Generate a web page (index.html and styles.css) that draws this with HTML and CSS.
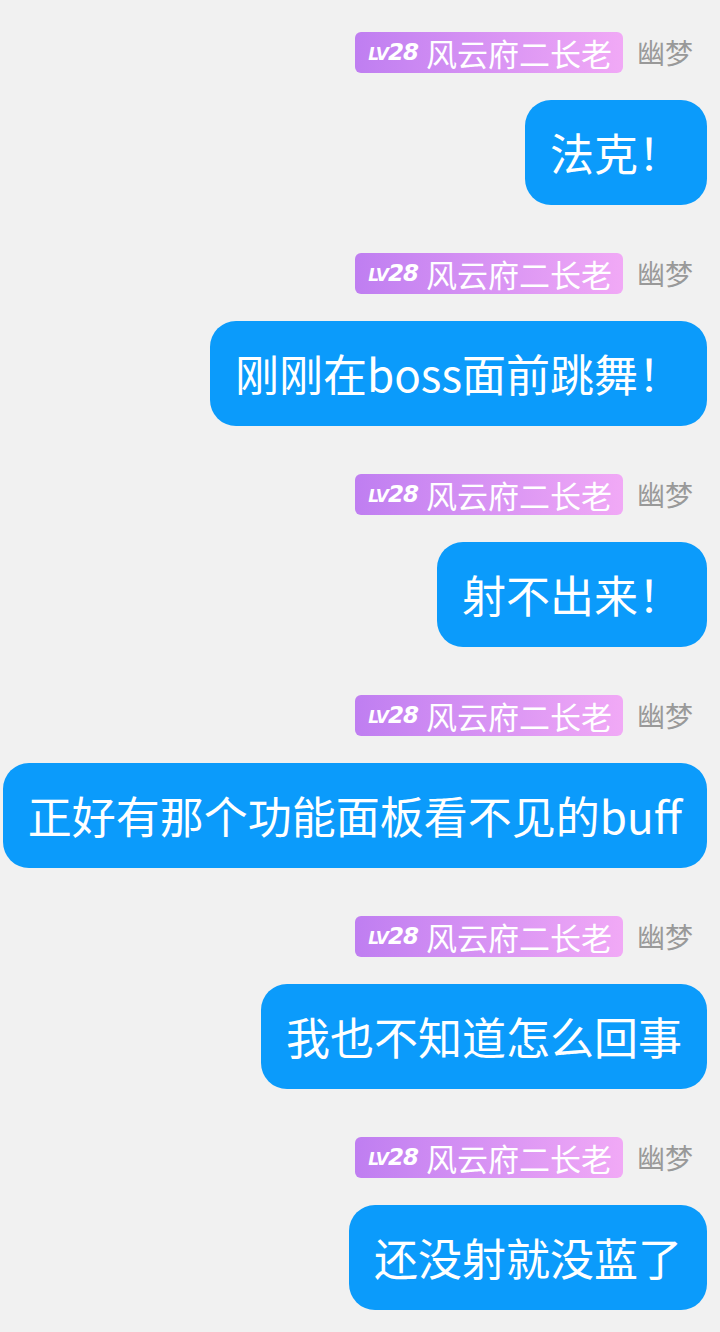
FILE: index.html
```html
<!DOCTYPE html>
<html lang="zh-CN">
<head>
    <meta charset="UTF-8">
    <meta name="viewport" content="width=device-width, initial-scale=1.0">
    <title>聊天记录</title>
    <link rel="stylesheet" href="styles.css">
</head>
<body>

    <div class="chat">

        <div class="msg">
            <div class="msg-head">
                <span class="badge"><span class="lv">LV<b>28</b></span>风云府二长老</span>
                <span class="name">幽梦</span>
            </div>
            <div class="bubble">法克！</div>
        </div>

        <div class="msg">
            <div class="msg-head">
                <span class="badge"><span class="lv">LV<b>28</b></span>风云府二长老</span>
                <span class="name">幽梦</span>
            </div>
            <div class="bubble">刚刚在boss面前跳舞！</div>
        </div>

        <div class="msg">
            <div class="msg-head">
                <span class="badge"><span class="lv">LV<b>28</b></span>风云府二长老</span>
                <span class="name">幽梦</span>
            </div>
            <div class="bubble">射不出来！</div>
        </div>

        <div class="msg">
            <div class="msg-head">
                <span class="badge"><span class="lv">LV<b>28</b></span>风云府二长老</span>
                <span class="name">幽梦</span>
            </div>
            <div class="bubble">正好有那个功能面板看不见的buff</div>
        </div>

        <div class="msg">
            <div class="msg-head">
                <span class="badge"><span class="lv">LV<b>28</b></span>风云府二长老</span>
                <span class="name">幽梦</span>
            </div>
            <div class="bubble">我也不知道怎么回事</div>
        </div>

        <div class="msg">
            <div class="msg-head">
                <span class="badge"><span class="lv">LV<b>28</b></span>风云府二长老</span>
                <span class="name">幽梦</span>
            </div>
            <div class="bubble">还没射就没蓝了</div>
        </div>

    </div>

</body>
</html>
```

FILE: styles.css
```css
/* General Styling */
body {
    margin: 0;
    background-color: #f1f1f1;
    font-family: "Noto Sans CJK SC", "Noto Sans", sans-serif;
}

.chat {
    display: flex;
    flex-direction: column;
    align-items: flex-end;
    gap: 48px;
    padding: 32px 13px 0 0;
}

/* One message: header row + bubble */
.msg {
    display: flex;
    flex-direction: column;
    align-items: flex-end;
    gap: 27px;
}

.msg-head {
    display: flex;
    align-items: center;
    gap: 14px;
    padding-right: 14px;
}

.badge {
    display: flex;
    align-items: center;
    height: 41px;
    padding: 0 11px 0 13px;
    border-radius: 6px;
    background: linear-gradient(90deg, #bf7ef1, #f1a9f6);
    color: white;
    font-size: 31px;
    line-height: 41px;
}

.lv {
    display: flex;
    align-items: baseline;
    font-family: "DejaVu Sans", sans-serif;
    font-style: italic;
    font-weight: bold;
    font-size: 17px;
    letter-spacing: -1px;
    margin-right: 8px;
    padding-top: 2px;
}

.lv b {
    font-size: 23px;
    letter-spacing: -1px;
}

.name {
    color: #999;
    font-size: 28px;
    line-height: 41px;
}

.bubble {
    background-color: #0b9bfb;
    color: white;
    font-size: 44px;
    line-height: 59px;
    padding: 23px 25px;
    border-radius: 26px;
    white-space: nowrap;
}
```
